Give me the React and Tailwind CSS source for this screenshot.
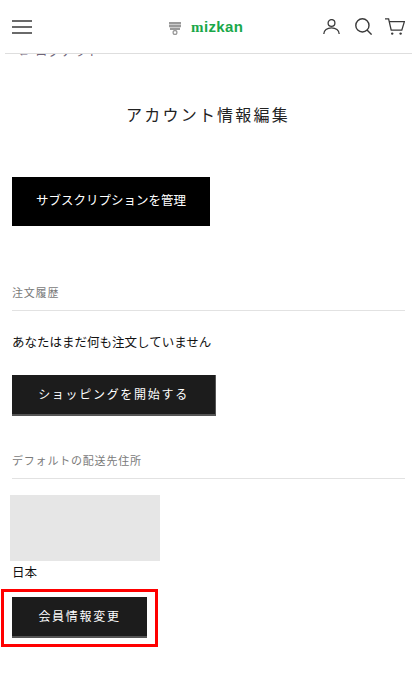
import { useState } from "react";

const JP_FONT = "font-['Liberation_Sans','Noto_Sans_CJK_JP',sans-serif]";

// Header icons
const MenuIcon = () => (
  <svg width="20" height="14" viewBox="0 0 20 14" fill="none" stroke="#3a3a3a" strokeWidth="1.3">
    <path d="M0 1h20M0 7h20M0 13h20" />
  </svg>
);

const UserIcon = () => (
  <svg width="17" height="15" viewBox="0 0 17 15" fill="none" stroke="#3a3a3a" strokeWidth="1.3">
    <circle cx="8.5" cy="4" r="3.4" />
    <path d="M0.8 15c0-3.8 3.4-6.2 7.7-6.2s7.7 2.4 7.7 6.2" />
  </svg>
);

const SearchIcon = () => (
  <svg width="17" height="17" viewBox="0 0 17 17" fill="none" stroke="#3a3a3a" strokeWidth="1.4">
    <circle cx="7.4" cy="7.4" r="6.6" />
    <path d="M12 12l4.6 4.6" />
  </svg>
);

const CartIcon = () => (
  <svg width="20" height="17" viewBox="0 0 20 17" fill="none" stroke="#3a3a3a" strokeWidth="1.3">
    <path d="M0 .8h3.6l2.6 11.4h10.6l2.6-8.6H4.3" />
    <circle cx="7.2" cy="15.6" r="1.2" fill="#3a3a3a" stroke="none" />
    <circle cx="15.6" cy="15.6" r="1.2" fill="#3a3a3a" stroke="none" />
  </svg>
);

const LogoMark = () => (
  <svg width="12" height="13" viewBox="0 0 12 13" fill="#9a9a9a">
    <path d="M0 0h12v2.4H0zM0 2.9h12v2.4H0zM1 5.8h10v2.2H1z" />
    <circle cx="6" cy="10.4" r="1.9" fill="none" stroke="#9a9a9a" strokeWidth="1.3" />
  </svg>
);

const Header = () => (
  <header className="h-[54px] flex items-center justify-between bg-white border-b border-[#dedede] ml-[5px] mr-[3px] pl-[7px] pr-[7px] relative z-10">
    <button aria-label="メニュー" className="flex">
      <MenuIcon />
    </button>
    <div className="absolute left-[164px] top-[21px] flex items-center gap-[10px]">
      <LogoMark />
      <span className="-mt-[2px] text-[15px] leading-none font-semibold tracking-[0.4px] text-[#1aa84a]">
        <span className="font-['Liberation_Serif',serif] font-bold">m</span>izkan
      </span>
    </div>
    <div className="flex items-center">
      <UserIcon />
      <span className="ml-[15px] flex"><SearchIcon /></span>
      <span className="ml-[13px] flex"><CartIcon /></span>
    </div>
  </header>
);

const SectionTitle = ({ children }) => (
  <div className="border-b border-[#e2e2e2] pb-[9px] text-[11px] leading-[16px] tracking-[0.8px] text-[#7a7a7a]">
    {children}
  </div>
);

const DarkButton = ({ children, className }) => (
  <button className={`block bg-[#1c1c1c] text-white text-[12px] tracking-[1.7px] border-b-2 border-r border-[#555] ${className}`}>
    {children}
  </button>
);

export default function App() {
  const [country] = useState("日本");

  return (
    <div className={`w-[415px] h-[674px] overflow-hidden bg-white text-[#111] ${JP_FONT}`}>
      <Header />
      <main className="px-[12px]">
        {/* back link, mostly hidden under the header */}
        <a className="block ml-[6px] -mt-[11px] h-[18px] text-[12px] leading-[18px] tracking-[1px] text-[#6f6478]">
          ← ログアウト
        </a>
        <h1 className="mt-[40px] text-center text-[16px] leading-[30px] tracking-[2.2px] text-[#222] pl-[1px]">
          アカウント情報編集
        </h1>
        <button className="block mt-[46px] w-[198px] h-[49px] bg-black text-white text-[12.5px]">
          サブスクリプションを管理
        </button>
        <div className="mt-[59px] -mr-[2px]">
          <SectionTitle>注文履歴</SectionTitle>
        </div>
        <p className="mt-[22px] text-[12.5px] leading-[20px]">あなたはまだ何も注文していません</p>
        <DarkButton className="mt-[22px] w-[204px] h-[41px]">ショッピングを開始する</DarkButton>
        <div className="mt-[37px] -mr-[2px]">
          <SectionTitle>デフォルトの配送先住所</SectionTitle>
        </div>
        <div className="mt-[16px] -ml-[2px] w-[150px] h-[66px] bg-[#e6e6e6]" />
        <p className="mt-[2px] text-[12.5px] leading-[20px]">{country}</p>
        {/* highlighted edit button */}
        <div className="mt-[6px] -ml-[11px] w-[157px] h-[58px] border-[3px] border-[#ff0000] pl-[8px] pt-[5px]">
          <DarkButton className="w-[135px] h-[41px] border-r-0">会員情報変更</DarkButton>
        </div>
      </main>
    </div>
  );
}
